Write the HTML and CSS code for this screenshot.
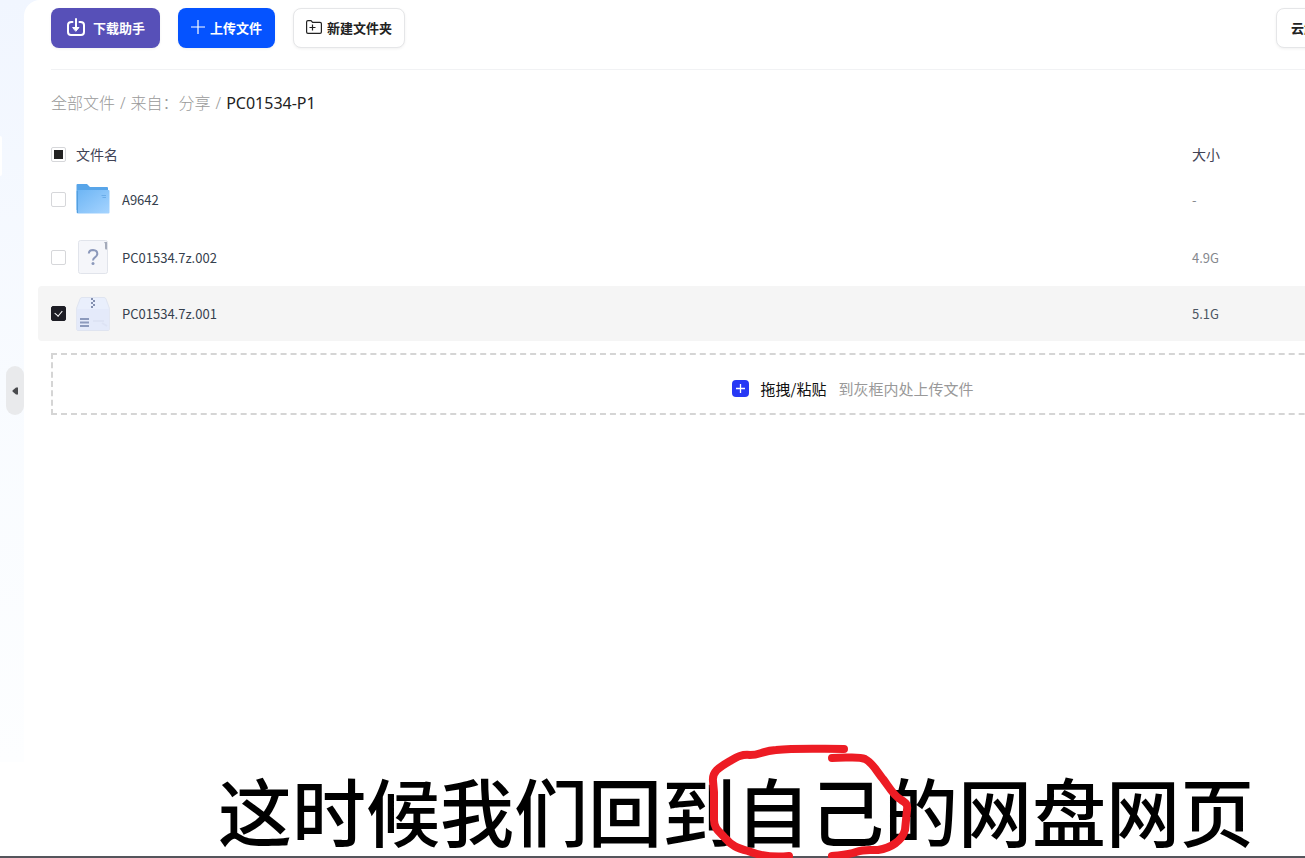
FILE: index.html
```html
<!DOCTYPE html>
<html lang="zh-CN">
<head>
    <meta charset="UTF-8">
    <title>全部文件</title>
    <link rel="stylesheet" href="styles.css">
</head>
<body>
    <div class="layout">
        <aside class="sidebar">
            <div class="sidebar-active"></div>
            <button type="button" class="collapse-button" aria-label="收起">
                <svg width="6" height="8" viewBox="0 0 6 8"><path d="M6 0.5V7.5H4L0.5 4.5V3.5L4 0.5Z" fill="#4a4b4e"/></svg>
            </button>
        </aside>

        <main class="panel">
            <div class="content">
                <div class="toolbar">
                    <button type="button" class="btn btn-helper">
                        <svg width="20" height="20" viewBox="0 0 20 20" fill="none" stroke="#fff" stroke-width="2" stroke-linecap="round">
                            <path d="M6.5 5H5.5C3.5 5 2 6 2 8V15C2 17 3 18 5 18H15C17 18 18 17 18 15V8C18 6 16.500 5 14.500 5H13.500"/>
                            <path d="M10 2V12"/>
                            <path d="M7 10.500H13L10 14Z" fill="#fff" stroke-width="1" stroke-linejoin="round"/>
                        </svg>
                        <span>下载助手</span>
                    </button>
                    <button type="button" class="btn btn-upload">
                        <svg width="14" height="14" viewBox="0 0 14 14" stroke="#fff" stroke-width="1.200"><path d="M7 0V14M0 7H14"/></svg>
                        <span>上传文件</span>
                    </button>
                    <button type="button" class="btn btn-plain">
                        <svg width="16" height="14" viewBox="0 0 16 14" fill="none" stroke="#222" stroke-width="1.200">
                            <path d="M0.600 2Q0.600 0.600 2 0.600H5L6.600 2.400H14Q15.400 2.400 15.400 3.800V12Q15.400 13.400 14 13.400H2Q0.600 13.400 0.600 12Z"/>
                            <path d="M6.500 4.500V10.500M3.500 7.500H9.500"/>
                        </svg>
                        <span>新建文件夹</span>
                    </button>
                    <div class="toolbar-right">
                        <button type="button" class="btn btn-plain">云解压</button>
                    </div>
                </div>

                <nav class="breadcrumb">
                    <a href="#">全部文件</a>
                    <span>/</span>
                    <a href="#">来自：分享</a>
                    <span>/</span>
                    <strong>PC01534-P1</strong>
                </nav>

                <table class="file-table">
                    <colgroup>
                        <col class="w-check">
                        <col class="w-icon">
                        <col>
                        <col class="w-size">
                    </colgroup>
                    <thead>
                        <tr>
                            <th class="col-check"><input type="checkbox" class="check check-part" aria-label="全选"></th>
                            <th colspan="2">文件名</th>
                            <th class="col-size">大小</th>
                        </tr>
                    </thead>
                    <tbody>
                        <tr>
                            <td class="col-check"><input type="checkbox" class="check" id="file1"></td>
                            <td class="col-icon">
                                <svg width="34" height="34" viewBox="0 0 34 34">
                                    <defs>
                                        <linearGradient id="folder" x1="0" y1="0" x2="1" y2="1">
                                            <stop offset="0" stop-color="#6db5f4"/>
                                            <stop offset="1" stop-color="#a6d4ff"/>
                                        </linearGradient>
                                    </defs>
                                    <path d="M0.500 3Q0.500 2 1.500 2H11L14 5H31Q32 5 32 6V28H0.500Z" fill="#58a5e9"/>
                                    <path d="M2 8H32.500Q33.500 8 33.500 9V30.500Q33.500 31.500 32.500 31.500H2Q0.500 31.500 0.500 30V9.500Z" fill="url(#folder)"/>
                                    <path d="M1.500 9V31" stroke="#559fde" stroke-width="1"/>
                                    <path d="M25.500 13.500H30M26.500 15.500H30" stroke="#6bade9" stroke-width="1"/>
                                </svg>
                            </td>
                            <td class="file-name"><label for="file1">A9642</label></td>
                            <td class="col-size">-</td>
                        </tr>
                        <tr>
                            <td class="col-check"><input type="checkbox" class="check" id="file2"></td>
                            <td class="col-icon">
                                <svg width="34" height="34" viewBox="0 0 34 34">
                                    <rect x="2.500" y="0.500" width="29" height="33" rx="2" fill="#f5f6fa" stroke="#e1e4eb"/>
                                    <path d="M28 2H31V9.500H30Q29 9.500 29 8V4Q29 3 28 2Z" fill="#a5abba"/>
                                    <path d="M12.800 13.500Q13 10 17 10Q21.300 10.200 21.300 13.800Q21.300 15.600 19.200 17.200Q17 18.600 17 20.500" fill="none" stroke="#8c99bb" stroke-width="2"/>
                                    <circle cx="17" cy="23.500" r="1.500" fill="#8c99bb"/>
                                </svg>
                            </td>
                            <td class="file-name"><label for="file2">PC01534.7z.002</label></td>
                            <td class="col-size">4.9G</td>
                        </tr>
                        <tr class="selected">
                            <td class="col-check"><input type="checkbox" class="check" id="file3" checked></td>
                            <td class="col-icon">
                                <svg width="34" height="34" viewBox="0 0 34 34">
                                    <path d="M6 0.500H28Q29.500 0.500 30 2L33.300 11V32Q33.300 33.500 32 33.500H2Q0.700 33.500 0.700 32V11L4 2Q4.500 0.500 6 0.500Z" fill="#e9effc" stroke="#dfe4f0"/>
                                    <path d="M1 12H33V32Q33 33 32 33H2Q1 33 1 32Z" fill="#e4eafa"/>
                                    <path d="M15 2H17M17 4H19M15 6H17M17 8H19M15 10H17" stroke="#8490b0" stroke-width="2"/>
                                    <path d="M4 22H13M4 25.500H13M4 29H13" stroke="#8c9abd" stroke-width="2"/>
                                    <path d="M17 24H28M26 26L31 29" stroke="#dde3f4" stroke-width="2"/>
                                </svg>
                            </td>
                            <td class="file-name"><label for="file3">PC01534.7z.001</label></td>
                            <td class="col-size">5.1G</td>
                        </tr>
                    </tbody>
                </table>

                <div class="drop-area">
                    <svg width="17" height="17" viewBox="0 0 17 17">
                        <rect width="17" height="17" rx="4" fill="#2738f5"/>
                        <path d="M8.500 4V13M4 8.500H13" stroke="#fff" stroke-width="1.300"/>
                    </svg>
                    <span class="drop-main">拖拽/粘贴</span>
                    <span class="drop-hint">到灰框内处上传文件</span>
                </div>
            </div>
        </main>
    </div>

    <!-- 字幕 -->
    <div class="caption">
        <span class="caption-text">这时候我们回到<span class="circled">自己<svg class="mark" width="206" height="116" viewBox="0 0 206 116" fill="none" stroke="#ed1c24" stroke-width="8" stroke-linecap="round" stroke-linejoin="round">
            <path d="M136 5C110 5 88 4 68 6C54 7 52 11 42 11C34 10 29 13 22 17C10 24 4 28 5 37L6 48L6 76C6 85 12 88 17 94C24 102 29 104 40 107C50 111 62 114 81 112"/>
            <path d="M124 14C140 14 150 12 157 15C165 19 169 28 175 35C181 43 186 52 192 55C198 59 200 60 199 66L197 86C194 97 183 104 170 106C160 106 156 105 148 108C140 111 132 111 124 112"/>
        </svg></span>的网盘网页</span>
    </div>
</body>
</html>
```

FILE: styles.css
```css
* {
    box-sizing: border-box;
}

body {
    margin: 0;
    min-height: 100vh;
    display: flex;
    flex-direction: column;
    overflow: hidden;
    background-color: #fff;
    color: #222;
    font-family: "Noto Sans CJK SC", sans-serif;
    font-size: 14px;
}

.layout {
    flex: 1;
    display: flex;
    background: linear-gradient(#f1f6ff, #f8fbff 50%, #fdfeff);
}

/* 左侧栏 */
.sidebar {
    position: relative;
    flex: none;
    width: 24px;
}

.sidebar-active {
    width: 2px;
    height: 40px;
    margin-top: 136px;
    background-color: #fff;
    border-radius: 0 4px 4px 0;
}

.collapse-button {
    position: absolute;
    top: 366px;
    right: 0;
    width: 18px;
    height: 49px;
    padding: 0;
    border: none;
    border-radius: 9px;
    background-color: #e9eaec;
    cursor: pointer;
}

/* 主区域比窗口宽，右侧被裁掉 */
.panel {
    flex: none;
    width: calc(100% + 352px);
    padding: 8px 14px 0;
    background-color: #fff;
    border-radius: 16px 0 0 0;
}

.toolbar {
    display: flex;
    gap: 18px;
    margin: 0 13px;
    padding-bottom: 21px;
    border-bottom: 1px solid #f1f2f4;
}

.toolbar-right {
    width: 378px;
    margin-left: auto;
}

.toolbar-right .btn {
    padding: 0 14px 2px;
}

.btn {
    display: flex;
    align-items: center;
    justify-content: center;
    gap: 5px;
    height: 40px;
    padding: 0 12px 2px;
    border: 1px solid transparent;
    border-radius: 8px;
    color: #fff;
    font-family: inherit;
    font-size: 13px;
    font-weight: 700;
    white-space: nowrap;
    cursor: pointer;
    box-shadow: 0 1px 3px rgba(0, 0, 0, 0.06);
}

.btn-helper {
    gap: 7px;
    padding: 0 14px 2px;
    background-color: #5750b8;
}

.btn-upload {
    background-color: #0553ff;
}

.btn-plain {
    border-color: #e5e6e8;
    background-color: #fff;
    color: #222;
}

.breadcrumb {
    display: flex;
    gap: 5px;
    margin: 21px 13px 0;
    color: #999;
    font-family: "Noto Sans", "Noto Sans CJK SC", sans-serif;
    font-size: 16px;
    font-weight: 300;
    line-height: 24px;
}

.breadcrumb a {
    color: inherit;
    text-decoration: none;
}

.breadcrumb strong {
    color: #222;
    font-weight: 400;
}

/* 文件列表 */
.file-table {
    width: 100%;
    margin-top: 23px;
    border-collapse: collapse;
    table-layout: fixed;
    text-align: left;
}

.w-check {
    width: 38px;
}

.w-icon {
    width: 46px;
}

.w-size {
    width: 475px;
}

.file-table th {
    height: 32px;
    padding: 0;
    color: #414355;
    font-weight: 400;
}

.file-table td {
    height: 58px;
    padding: 0;
    color: #35404d;
    font-size: 13px;
}

.file-table .selected td {
    height: 55px;
    background-color: #f5f5f5;
}

.file-table .selected td:first-child {
    border-radius: 4px 0 0 4px;
}

.file-table .col-check {
    padding-left: 13px;
}

.file-table td.col-size {
    color: #85888e;
}

.file-table .selected td.col-size {
    color: #4c5663;
}

.col-icon svg {
    display: block;
}

.check {
    appearance: none;
    display: grid;
    place-content: center;
    width: 15px;
    height: 15px;
    margin: 0;
    border: 1px solid #d6d7da;
    border-radius: 2px;
    background-color: #fff;
}

.check-part::before {
    content: "";
    width: 9px;
    height: 9px;
    background-color: #222;
}

.check:checked {
    border-color: #1d1d25;
    background-color: #1d1d25;
}

.check:checked::before {
    content: "";
    width: 4px;
    height: 6px;
    margin-bottom: 2px;
    border: solid #fff;
    border-width: 0 1px 1px 0;
    transform: rotate(40deg);
}

.drop-area {
    display: flex;
    align-items: center;
    justify-content: center;
    gap: 12px;
    height: 62px;
    margin: 12px 13px 0;
    padding-top: 8px;
    border: 2px dashed #d5d5d5;
    font-size: 15px;
}

.drop-main {
    color: #111;
}

.drop-hint {
    color: #999;
}

/* 字幕 */
.caption {
    padding-left: 218px;
    border-bottom: 2px solid #55555c;
    background-color: #fff;
    color: #000;
    font-size: 74px;
    font-weight: 500;
    line-height: 94px;
    white-space: nowrap;
}

.circled {
    position: relative;
}

.mark {
    position: absolute;
    left: -28px;
    bottom: 2px;
}
```
